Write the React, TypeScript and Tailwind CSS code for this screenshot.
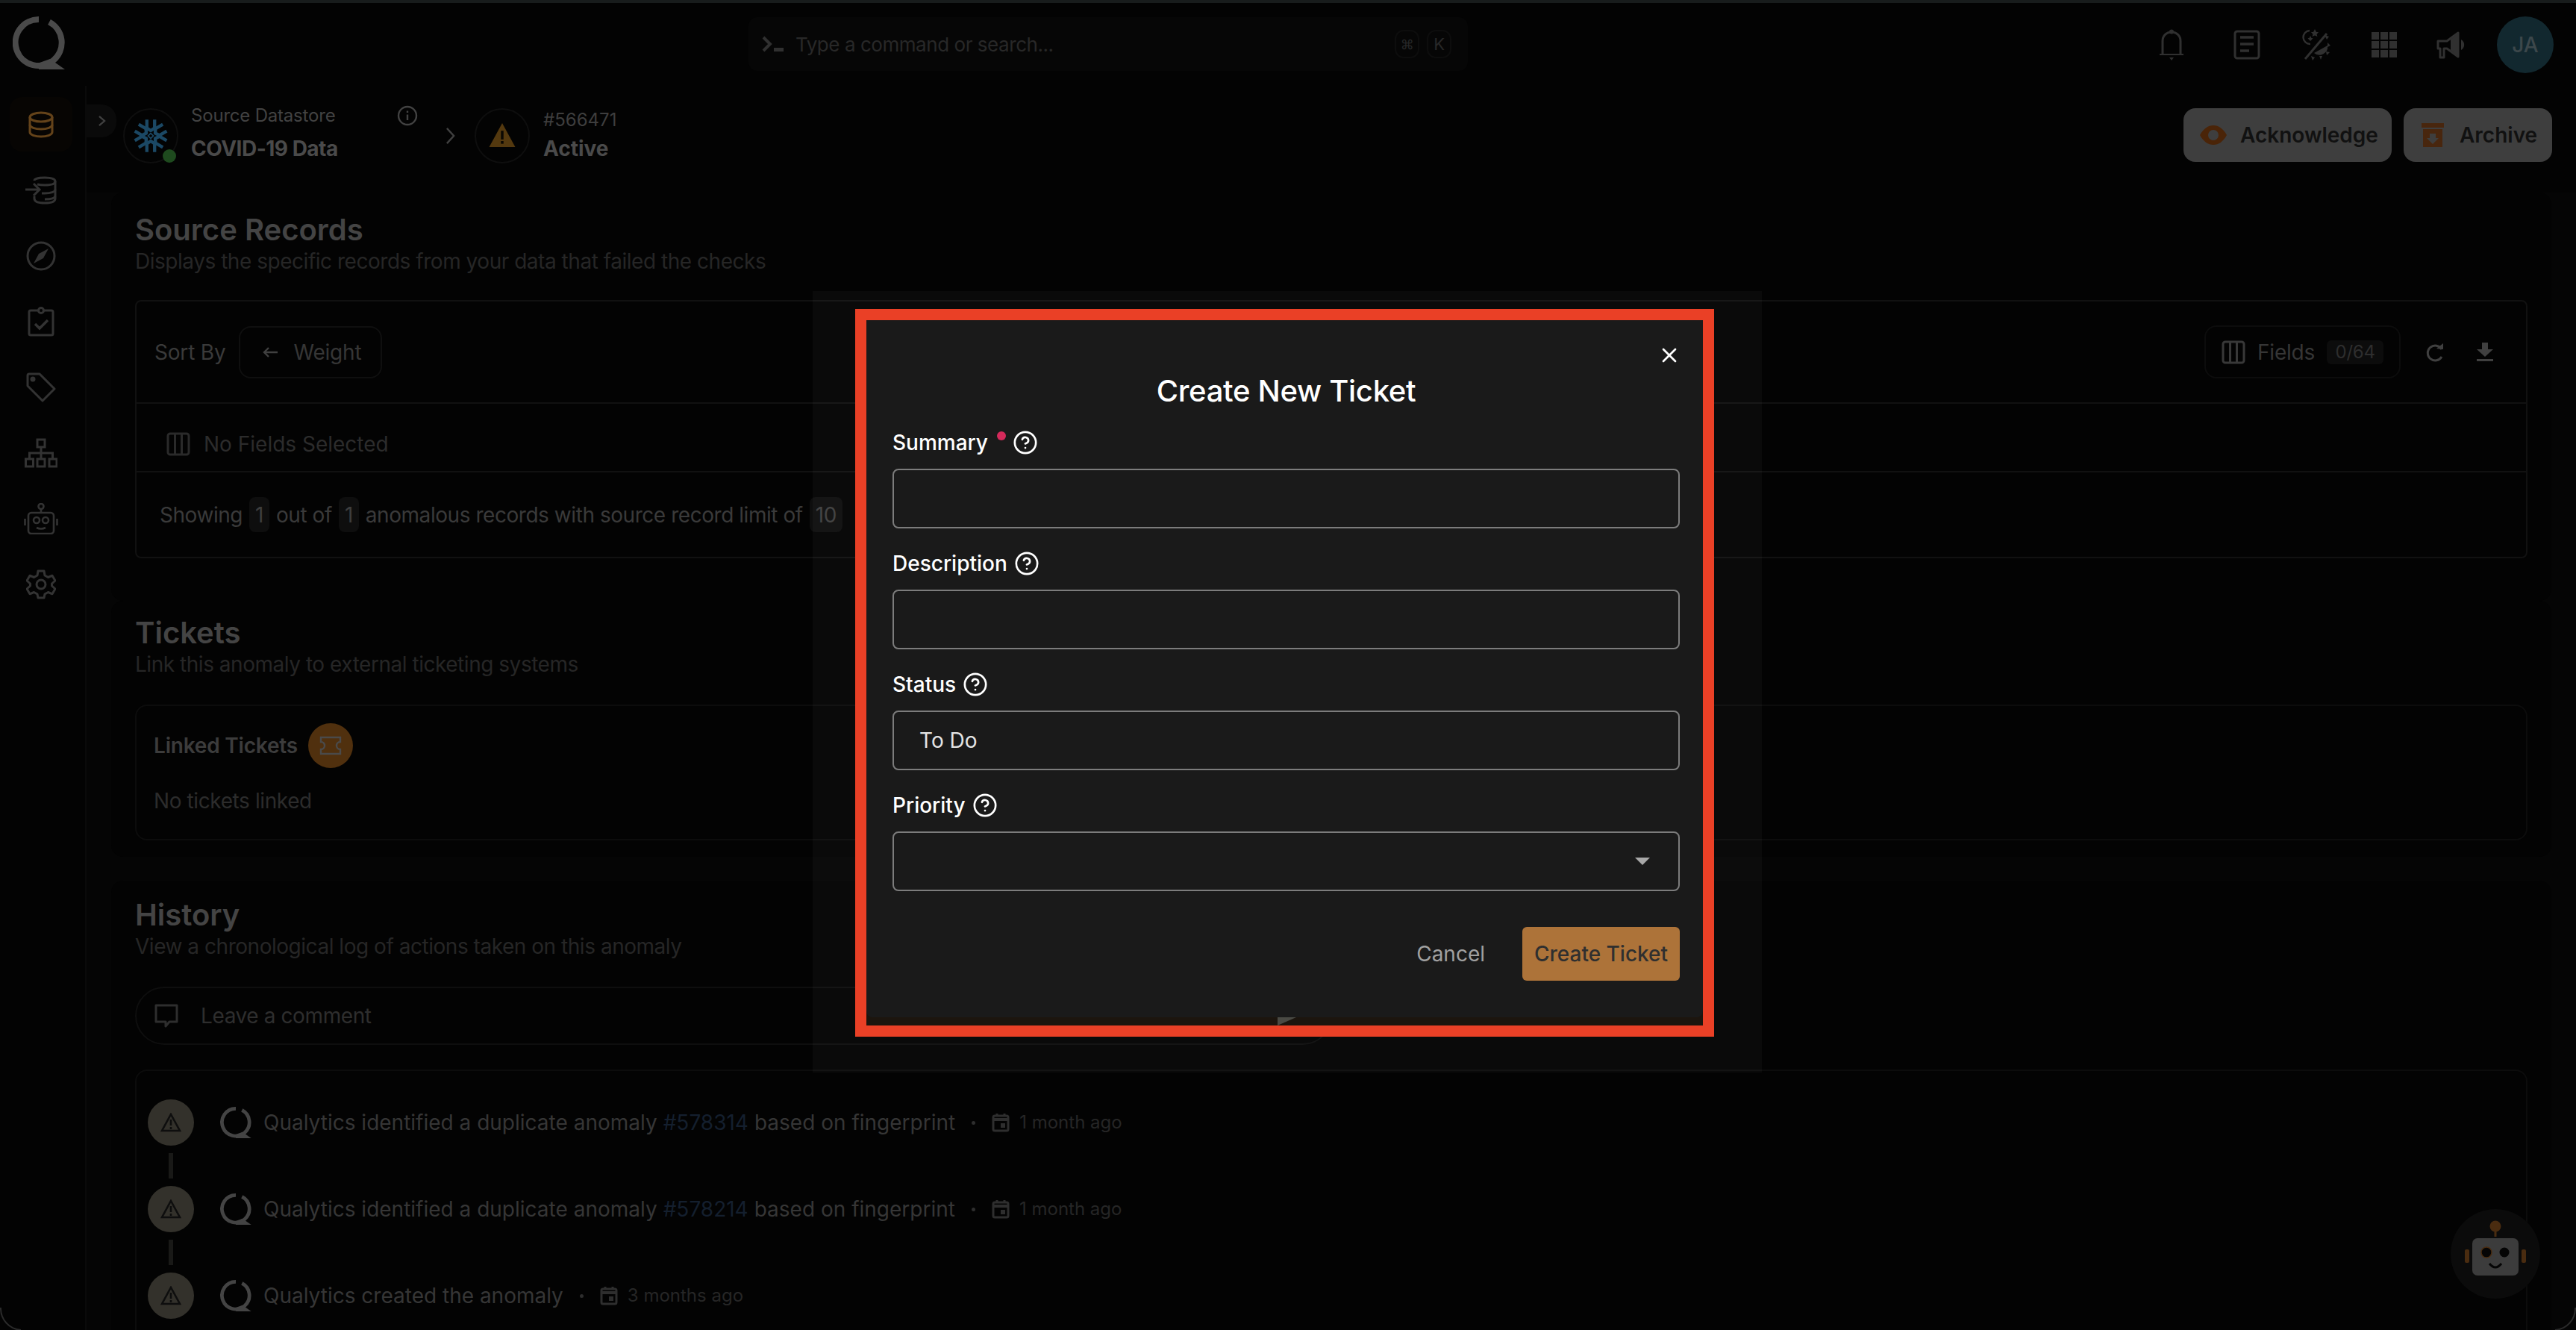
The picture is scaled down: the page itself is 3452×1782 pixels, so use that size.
import { CircleHelp, X } from "lucide-react"

function QLogo({ className, color = "#4a4a4a" }: { className: string; color?: string }) {
  return (
    <svg viewBox="0 0 70 71" className={className} fill="none">
      <path d="M35 4 A31 31 0 1 0 49 7.5" stroke={color} strokeWidth="8" />
      <path d="M36 62 L50 57 L70 71 L35 71 Z" fill={color} />
    </svg>
  )
}

function Snowflake() {
  const angles = [0, 60, 120, 180, 240, 300]
  return (
    <svg viewBox="-30 -30 60 60" className="h-[52px] w-[52px]" fill="none" stroke="#1b4864" strokeWidth="5">
      {angles.map((a) => (
        <path key={a} d="M-6 -25 V-12 L0 -8 L6 -12 V-25" transform={`rotate(${a})`} strokeLinejoin="round" />
      ))}
      <path d="M0 -4 L4 0 L0 4 L-4 0 Z" strokeWidth="2" />
    </svg>
  )
}

function WarnTriangle({ className, color, mark }: { className: string; color: string; mark: string }) {
  return (
    <svg viewBox="0 0 24 22" className={className}>
      <path d="M12 0 L24 22 H0 Z" fill={color} />
      <rect x="10.8" y="7" width="2.4" height="8" fill={mark} />
      <rect x="10.8" y="16.5" width="2.4" height="2.5" fill={mark} />
    </svg>
  )
}

function InfoIcon() {
  return (
    <svg viewBox="0 0 28 28" className="h-[28px] w-[28px]" fill="none" stroke="#424242" strokeWidth="2.4">
      <circle cx="14" cy="14" r="12" />
      <path d="M14 12.5 V20 M14 7.5 V10" />
    </svg>
  )
}

function ColumnsIcon({ className, color }: { className: string; color: string }) {
  return (
    <svg viewBox="0 0 32 32" className={className} fill="none" stroke={color} strokeWidth="3">
      <rect x="2" y="2" width="28" height="28" rx="3" />
      <path d="M11.5 2 V30 M20.5 2 V30" />
    </svg>
  )
}

function CalendarIcon({ className }: { className: string }) {
  return (
    <svg viewBox="0 0 24 26" className={className} fill="none">
      <rect x="2" y="4" width="20" height="20" rx="2" stroke="#2e2e2e" strokeWidth="3" />
      <path d="M2 9 H22" stroke="#2e2e2e" strokeWidth="4" />
      <path d="M7 1 V5 M17 1 V5" stroke="#2e2e2e" strokeWidth="3" />
      <rect x="12" y="14" width="6" height="6" fill="#2e2e2e" />
    </svg>
  )
}

const navStroke = "#333333"

function NavIcon({ name }: { name: string }) {
  if (name === "database") {
    return (
      <svg viewBox="0 0 34 36" className="h-[36px] w-[34px]" fill="none" stroke="#64431a" strokeWidth="3">
        <ellipse cx="17" cy="8" rx="15" ry="6" />
        <path d="M2 8 V28 C2 31.5 9 34 17 34 C25 34 32 31.5 32 28 V8" />
        <path d="M2 18 C2 21.5 9 24 17 24 C25 24 32 21.5 32 18" />
      </svg>
    )
  }
  if (name === "import") {
    return (
      <svg viewBox="0 0 42 38" className="h-[38px] w-[42px]" fill="none" stroke={navStroke} strokeWidth="3">
        <path d="M12 6 C12 3.5 18 2 26 2 C34 2 40 3.5 40 7 C40 10.5 34 12 26 12 C22 12 18 11.5 16 11" />
        <path d="M40 7 V30 C40 34 34 36 26 36 C18 36 12 34 12 30 V27" />
        <path d="M40 18 C40 21 34 23 26 23 H22 M40 27 C39 30 34 31 26 31" />
        <path d="M0 18 H18 M11 10 L19 18 L11 26" />
      </svg>
    )
  }
  if (name === "compass") {
    return (
      <svg viewBox="0 0 40 40" className="h-[40px] w-[40px]" fill="none">
        <circle cx="20" cy="20" r="18" stroke={navStroke} strokeWidth="3" />
        <path d="M30 10 L23 23 L10 30 L17 17 Z" fill={navStroke} />
      </svg>
    )
  }
  if (name === "clipboard") {
    return (
      <svg viewBox="0 0 36 40" className="h-[40px] w-[36px]" fill="none" stroke={navStroke} strokeWidth="3">
        <rect x="2" y="5" width="32" height="33" rx="2" />
        <circle cx="18" cy="5" r="3.5" fill="#030303" />
        <path d="M10 23 L16 29 L27 18" strokeWidth="3.5" />
      </svg>
    )
  }
  if (name === "tag") {
    return (
      <svg viewBox="0 0 40 40" className="h-[40px] w-[40px]" fill="none" stroke={navStroke} strokeWidth="3">
        <path d="M2 4 Q2 2 4 2 H18 L38 22 L22 38 L2 18 Z" strokeLinejoin="round" />
        <circle cx="9" cy="9" r="2" fill={navStroke} />
      </svg>
    )
  }
  if (name === "org") {
    return (
      <svg viewBox="0 0 44 40" className="h-[40px] w-[44px]" fill="none" stroke={navStroke} strokeWidth="3">
        <rect x="17" y="2" width="10" height="10" />
        <rect x="1.5" y="28" width="10" height="10" />
        <rect x="17" y="28" width="10" height="10" />
        <rect x="33" y="28" width="10" height="10" />
        <path d="M22 12 V28 M6.5 28 V20 H37.5 V28" />
      </svg>
    )
  }
  if (name === "robot") {
    return (
      <svg viewBox="0 0 46 42" className="h-[42px] w-[46px]" fill="none" stroke={navStroke} strokeWidth="2.6">
        <circle cx="23" cy="4.5" r="3.5" />
        <path d="M23 8 V13" />
        <rect x="6" y="13" width="34" height="28" rx="4" />
        <circle cx="17" cy="23" r="4" />
        <circle cx="29" cy="23" r="4" />
        <path d="M17 33 Q23 36 29 33 M1.5 21 V30 M44.5 21 V30" />
      </svg>
    )
  }
  return (
    <svg viewBox="0 0 40 40" className="h-[40px] w-[40px]" fill="none" stroke={navStroke} strokeWidth="3">
      <path
        d="M16 2 H24 L25 8 L29.5 10.5 L35 8.2 L39 15 L34.5 19 V22 L39 26 L35 32.8 L29.5 30.5 L25 33 L24 38 H16 L15 33 L10.5 30.5 L5 32.8 L1 26 L5.5 22 V19 L1 15 L5 8.2 L10.5 10.5 L15 8 Z"
        strokeLinejoin="round"
      />
      <circle cx="20" cy="20" r="6" />
    </svg>
  )
}

function TopIcons() {
  const c = "#303030"
  return (
    <div className="flex items-center">
      <svg viewBox="0 0 34 42" className="h-[42px] w-[34px]" fill="none">
        <path d="M5 33 V16 C5 9 10 4 17 4 C24 4 29 9 29 16 V33" stroke={c} strokeWidth="3" />
        <path d="M1 33 H33 V35 H1 Z" fill={c} />
        <circle cx="17" cy="3.5" r="3" fill={c} />
        <path d="M14 38 H20 L17 42 Z" fill={c} />
      </svg>
      <svg viewBox="0 0 36 40" className="ml-[66px] h-[40px] w-[36px]" fill="none" stroke={c} strokeWidth="3">
        <rect x="2" y="2" width="32" height="36" rx="3" />
        <path d="M9 10 H27 M9 19 H27 M9 28 H21" strokeWidth="3.5" />
      </svg>
      <svg viewBox="0 0 38 42" className="ml-[56px] h-[42px] w-[38px]" fill="none">
        <path d="M10 2 A9 9 0 0 0 11 20" stroke={c} strokeWidth="2.4" />
        <path d="M17 0 L19 4 L22 4 L19.5 7 L20.5 10 L17 8.5 L13.5 10 L14.5 7 L12 4 L15 4 Z M11 9 L12.5 12 L14.5 12 L13 14 L11 16 L9 14 L7.5 12 L9.5 12 Z" fill={c} />
        <path d="M33 6 L4 40" stroke={c} strokeWidth="3" />
        <path d="M34 22 A11 11 0 0 1 16 32 Z" fill={c} />
        <path d="M30 8 L36 10 L33 14 Z M34 18 L38 22 L34 24 Z M32 30 L37 31 L33 35 Z M23 36 L27 36 L25 41 Z M12 36 L17 38 L14 42 Z" fill={c} />
      </svg>
      <div className="ml-[55px] grid h-[34px] w-[34px] grid-cols-3 gap-[2px]">
        {[0, 1, 2, 3, 4, 5, 6, 7, 8].map((i) => (
          <div key={i} className="bg-[#303030]" />
        ))}
      </div>
      <svg viewBox="0 0 40 38" className="ml-[52px] h-[38px] w-[40px]" fill="none">
        <path d="M3 14 H15 L30 3 V35 L15 24 H11 V36 H6 V24 H3 Z" stroke={c} strokeWidth="3" fill="none" strokeLinejoin="round" />
        <path d="M20 12 L30 3 V35 L20 26 Z" fill={c} />
        <path d="M34 12 A8 8 0 0 1 34 26 Z" fill={c} />
      </svg>
      <div className="ml-[42px] flex h-[76px] w-[76px] items-center justify-center rounded-full bg-[#12282f] text-[28px] font-medium text-[#3c474b]">
        JA
      </div>
    </div>
  )
}

function Panel({ className, children }: { className: string; children: React.ReactNode }) {
  return <section className={`mx-[33px] rounded-[16px] bg-[#030303] px-[32px] ${className}`}>{children}</section>
}

function Heading({ title, sub }: { title: string; sub: string }) {
  return (
    <>
      <h2 className="text-[40px] leading-[48px] font-semibold text-[#444444]">{title}</h2>
      <p className="text-[28px] leading-[36px] tracking-[-0.47px] text-[#262626]">{sub}</p>
    </>
  )
}

function Pill({ children }: { children: React.ReactNode }) {
  return (
    <span className="mx-[9px] flex h-[47px] items-center rounded-[8px] bg-[#0e0e0e] px-[8px] text-[#3e3e3e]">{children}</span>
  )
}

function HistoryRow({ children, last }: { children: React.ReactNode; last?: boolean }) {
  return (
    <>
      <div className="flex h-[62px] items-center text-[28px] text-[#363636]">
        <div className="flex h-[62px] w-[62px] items-center justify-center rounded-full bg-[#33312b]">
          <svg viewBox="0 0 28 26" className="h-[26px] w-[28px]" fill="none" stroke="#0e0e0e" strokeWidth="2.6">
            <path d="M14 2 L26 24 H2 Z" />
            <path d="M14 9 V17 M14 19 V22" />
          </svg>
        </div>
        <QLogo className="mr-[16px] ml-[35px] h-[42px] w-[42px]" color="#444444" />
        {children}
      </div>
      {!last && <div className="my-[10px] ml-[28px] h-[34px] w-[6px] bg-[#191917]" />}
    </>
  )
}

function TimeAgo({ text }: { text: string }) {
  return (
    <>
      <span className="mx-[22px] h-[5px] w-[5px] rounded-full bg-[#2e2e2e]" />
      <CalendarIcon className="mr-[13px] h-[26px] w-[24px]" />
      <span className="text-[24px] text-[#262626]">{text}</span>
    </>
  )
}

function Field({ label, required, value, select }: { label: string; required?: boolean; value?: string; select?: boolean }) {
  return (
    <div className="mb-[29px]">
      <div className="flex h-[36px] items-center text-[28px] leading-[36px] font-medium text-white">
        {label}
        {required && <span className="mb-[18px] ml-[12px] h-[12px] w-[12px] rounded-full bg-[#d42a5b]" />}
        <CircleHelp className="ml-[9px] h-[34px] w-[34px] text-white" strokeWidth={1.9} />
      </div>
      <div className="mt-[17px] flex h-[80px] items-center justify-between rounded-[8px] border-2 border-[#7c7c7c] pr-[38px] pl-[34px] text-[28px] text-[#e4e4e4]">
        <span>{value}</span>
        {select && <span className="h-0 w-0 border-x-[10px] border-t-[10px] border-x-transparent border-t-[#a8a8a8]" />}
      </div>
    </div>
  )
}

export default function App() {
  const navItems = ["import", "compass", "clipboard", "tag", "org", "robot", "gear"]

  return (
    <div className="relative flex h-screen w-screen flex-col overflow-hidden bg-[#030303] [font-family:Inter,sans-serif]">
      <div className="h-[4px] shrink-0 bg-[#181c1c]" />

      {/* Top bar */}
      <header className="flex h-[111px] shrink-0 items-start">
        <QLogo className="mt-[18px] ml-[17px] h-[71px] w-[70px]" />
        <div className="mt-[19px] ml-[916px] flex h-[72px] w-[964px] items-center rounded-[12px] bg-[#060606] pr-[22px] pl-[18px] text-[26px] tracking-[-0.45px] text-[#282828]">
          <svg viewBox="0 0 30 22" className="mr-[15px] h-[22px] w-[30px]" fill="none">
            <path d="M2 2 L11 11 L2 20" stroke="#303030" strokeWidth="4" />
            <rect x="16" y="16" width="13" height="5" fill="#303030" />
          </svg>
          <span>Type a command or search...</span>
          <span className="ml-auto flex h-[38px] w-[33px] items-center justify-center rounded-[12px] border-2 border-[#0d0d0d] text-[18px]">⌘</span>
          <span className="ml-[10px] flex h-[38px] w-[33px] items-center justify-center rounded-[12px] border-2 border-[#0d0d0d] text-[22px]">K</span>
        </div>
        <div className="mt-[18px] ml-[926px]">
          <TopIcons />
        </div>
      </header>

      <div className="flex min-h-0 flex-1">
        {/* Sidebar */}
        <aside className="flex w-[116px] shrink-0 flex-col border-r-2 border-[#0a0a0a] pt-[15px] pl-[13px]">
          <div className="mb-[15px] flex h-[73px] w-[84px] items-center justify-center rounded-[16px] bg-[#070503]">
            <NavIcon name="database" />
          </div>
          {navItems.map((n) => (
            <div key={n} className="mb-[15px] flex h-[73px] w-[84px] items-center justify-center">
              <NavIcon name={n} />
            </div>
          ))}
        </aside>

        <main className="relative flex min-w-0 flex-1 flex-col bg-[#050505]">
          {/* Breadcrumb and actions */}
          <div className="flex h-[143px] shrink-0 items-start bg-[#030303] pt-[30px] pr-[32px] pl-[49px]">
            <div className="relative flex h-[74px] w-[74px] shrink-0 items-center justify-center rounded-full border-2 border-[#0e0e0e]">
              <Snowflake />
              <span className="absolute top-[53px] left-[51px] h-[18px] w-[18px] rounded-full bg-[#1e4a1e]" />
            </div>
            <div className="-mt-[4px] ml-[17px] w-[304px] shrink-0">
              <div className="flex h-[28px] items-center">
                <span className="w-[276px] text-[24px] leading-[28px] tracking-[-0.2px] whitespace-nowrap text-[#424242]">Source Datastore</span>
                <InfoIcon />
              </div>
              <div className="mt-[12px] text-[28px] leading-[36px] font-bold tracking-[-0.5px] whitespace-nowrap text-[#4a4a4a]">COVID-19 Data</div>
            </div>
            <svg viewBox="0 0 14 26" className="mt-[25px] ml-[37px] h-[24px] w-[13px]" fill="none" stroke="#404040" strokeWidth="2.6">
              <path d="M2 2 L12 13 L2 24" />
            </svg>
            <div className="ml-[26px] flex h-[74px] w-[74px] shrink-0 items-center justify-center rounded-full border-2 border-[#0e0e0e]">
              <WarnTriangle className="mb-[2px] h-[32px] w-[36px]" color="#54390f" mark="#0b0803" />
            </div>
            <div className="ml-[18px]">
              <div className="mt-[1px] text-[24px] leading-[30px] text-[#3e3e3e]">#566471</div>
              <div className="mt-[5px] text-[28px] leading-[36px] font-bold text-[#4a4a4a]">Active</div>
            </div>
            <div className="ml-auto flex">
              <button className="flex h-[72px] w-[279px] items-center rounded-[16px] bg-[#3e3e3e] pl-[22px] text-[28px] font-semibold text-[#111]">
                <svg viewBox="0 0 36 26" className="mr-[18px] h-[26px] w-[36px]">
                  <path fillRule="evenodd" d="M0 13 C5 4 11 0 18 0 C25 0 31 4 36 13 C31 22 25 26 18 26 C11 26 5 22 0 13 Z M18 6 A7 7 0 1 0 18 20 A7 7 0 1 0 18 6 Z" fill="#4a2408" />
                </svg>
                Acknowledge
              </button>
              <button className="ml-[16px] flex h-[72px] w-[199px] items-center rounded-[16px] bg-[#3e3e3e] pl-[24px] text-[28px] font-semibold text-[#111]">
                <svg viewBox="0 0 30 32" className="mr-[21px] h-[32px] w-[30px]">
                  <path d="M0 0 H30 V6 H0 Z" fill="#48260e" />
                  <path fillRule="evenodd" d="M2 8 H28 V32 H2 Z M11 14 V20 H7 L15 28 L23 20 H19 V14 Z" fill="#48260e" />
                </svg>
                Archive
              </button>
            </div>
          </div>

          {/* Collapse tab sits on the sidebar edge */}
          <div className="absolute top-[25px] left-0 flex h-[44px] w-[40px] items-center justify-center rounded-r-[20px] bg-[#0a0a0a]">
            <svg viewBox="0 0 12 18" className="h-[16px] w-[11px]" fill="none" stroke="#404040" strokeWidth="2.6">
              <path d="M2 2 L10 9 L2 16" />
            </svg>
          </div>

          {/* Source records */}
          <Panel className="pt-[26px] pb-[57px]">
            <Heading title="Source Records" sub="Displays the specific records from your data that failed the checks" />
            <div className="mt-[34px] rounded-[8px] border-2 border-[#111] text-[28px]">
              <div className="flex h-[137px] items-center border-b-2 border-[#111] pr-[44px] pl-[24px] tracking-[-0.2px] text-[#3a3a3a]">
                Sort By
                <div className="ml-[18px] flex h-[70px] w-[192px] items-center rounded-[16px] border-2 border-[#0f0f0f] pl-[30px] text-[#363636]">
                  <svg viewBox="0 0 20 14" className="mr-[21px] h-[14px] w-[20px]" fill="none" stroke="#404040" strokeWidth="2.4">
                    <path d="M20 7 H2 M8 1 L2 7 L8 13" />
                  </svg>
                  Weight
                </div>
                <div className="ml-auto flex h-[71px] w-[263px] items-center rounded-[16px] border-2 border-[#0c0c0c] pl-[21px] text-[#363636]">
                  <ColumnsIcon className="mr-[16px] h-[32px] w-[32px]" color="#383838" />
                  Fields
                  <span className="ml-[16px] flex h-[32px] w-[76px] items-center justify-center rounded-[6px] bg-[#0c0c0c] text-[24px] text-[#2e2e2e]">0/64</span>
                </div>
                <svg viewBox="0 0 24 28" className="ml-[34px] h-[28px] w-[24px]" fill="none" stroke="#404040" strokeWidth="3">
                  <path d="M21 10 A10 10 0 1 0 21 20" />
                  <path d="M14 9 L23 10 L23 2 Z" fill="#404040" stroke="none" />
                </svg>
                <svg viewBox="0 0 22 26" className="ml-[44px] h-[26px] w-[22px]" fill="#404040">
                  <path d="M7 0 H15 V9 H22 L11 19 L0 9 H7 Z" />
                  <rect x="0" y="22" width="22" height="3" />
                </svg>
              </div>
              <div className="flex h-[92px] items-center border-b-2 border-[#111] pt-[18px] pl-[39px] text-[#2c2c2c]">
                <ColumnsIcon className="mr-[17px] h-[32px] w-[34px]" color="#2a2a2a" />
                No Fields Selected
              </div>
              <div className="flex h-[113px] items-center pl-[31px] tracking-[-0.45px] text-[#3a3a3a]">
                Showing
                <Pill>1</Pill>
                out of
                <Pill>1</Pill>
                anomalous records with source record limit of
                <Pill>10</Pill>
              </div>
            </div>
          </Panel>

          {/* Tickets */}
          <Panel className="pt-[19px] pb-[22px]">
            <Heading title="Tickets" sub="Link this anomaly to external ticketing systems" />
            <div className="mt-[36px] rounded-[16px] border-2 border-[#0c0c0c] pt-[23px] pb-[33px] pl-[23px] text-[28px]">
              <div className="flex items-center font-semibold tracking-[-0.2px] text-[#3c3c3c]">
                Linked Tickets
                <span className="ml-[14px] flex h-[60px] w-[60px] items-center justify-center rounded-full bg-[#50300e]">
                  <svg viewBox="0 0 30 26" className="h-[26px] w-[32px]" fill="none" stroke="#4a4a4a" strokeWidth="2.4">
                    <path d="M2 2 H28 V8 A5 5 0 0 0 28 18 V24 H2 V18 A5 5 0 0 0 2 8 Z" />
                  </svg>
                </span>
              </div>
              <p className="mt-[26px] leading-[36px] tracking-[-0.4px] text-[#2c2c2c]">No tickets linked</p>
            </div>
          </Panel>

          {/* History */}
          <Panel className="mt-[32px] flex-1 pt-[22px]">
            <Heading title="History" sub="View a chronological log of actions taken on this anomaly" />
            <div className="mt-[36px] flex h-[78px] w-[1604px] items-center rounded-[39px] border-2 border-[#0e0e0e] pl-[24px] text-[28px] tracking-[-0.4px] text-[#2e2e2e]">
              <svg viewBox="0 0 32 32" className="mr-[30px] h-[32px] w-[32px]" fill="none" stroke="#2e2e2e" strokeWidth="3">
                <path d="M2 2 H30 V24 H20 L15 30 V24 H2 Z" strokeLinejoin="round" />
              </svg>
              Leave a comment
            </div>
            <div className="mt-[33px] h-[400px] rounded-[16px] border-2 border-[#0c0c0c] pt-[38px] pl-[15px]">
              <HistoryRow>
                Qualytics identified a duplicate anomaly
                <span className="mx-[8px] text-[#141f2e]">#578314</span>
                based on fingerprint
                <TimeAgo text="1 month ago" />
              </HistoryRow>
              <HistoryRow>
                Qualytics identified a duplicate anomaly
                <span className="mx-[8px] text-[#141f2e]">#578214</span>
                based on fingerprint
                <TimeAgo text="1 month ago" />
              </HistoryRow>
              <HistoryRow last>
                Qualytics created the anomaly
                <TimeAgo text="3 months ago" />
              </HistoryRow>
            </div>
          </Panel>
        </main>
      </div>

      {/* Assistant bubble */}
      <div className="absolute top-[1620px] left-[3284px] flex h-[120px] w-[120px] items-center justify-center rounded-full bg-[#0b0b0b]">
        <svg viewBox="0 0 82 90" className="h-[90px] w-[82px]">
          <circle cx="41" cy="8" r="7.5" fill="#4a2c10" />
          <rect x="39.5" y="14" width="3" height="8" fill="#4a2c10" />
          <rect x="10" y="24" width="62" height="50" rx="7" fill="#3c3c3c" />
          <rect x="0" y="39" width="6" height="18" rx="2" fill="#4a2c10" />
          <rect x="76" y="39" width="6" height="18" rx="2" fill="#4a2c10" />
          <circle cx="29" cy="43" r="7" fill="#050505" stroke="#4a2c10" strokeWidth="1.4" />
          <circle cx="53" cy="43" r="6.5" fill="#050505" />
          <path d="M33 58 Q41 68 49 58" fill="none" stroke="#050505" strokeWidth="3" />
        </svg>
      </div>

      {/* Window corners */}
      <svg viewBox="0 0 30 30" className="absolute bottom-0 left-0 h-[30px] w-[30px]" fill="none" stroke="#2a2a2a" strokeWidth="2">
        <path d="M1 0 A29 29 0 0 0 28 30" />
      </svg>
      <svg viewBox="0 0 30 30" className="absolute right-0 bottom-0 h-[30px] w-[30px]" fill="none" stroke="#2a2a2a" strokeWidth="2">
        <path d="M29 0 A29 29 0 0 1 2 30" />
      </svg>

      {/* Modal backdrop panel */}
      <div className="absolute top-[390px] left-[1089px] h-[1047px] w-[1272px] bg-white/[0.03]" />

      {/* Modal */}
      <div className="absolute top-[414px] left-[1146px] flex h-[975px] w-[1151px] flex-col border-[15px] border-[#ea4026] bg-[#1c150e]">
        <div className="relative h-[934px] shrink-0 rounded-b-[8px] bg-[#1a1a1a] pr-[31px] pl-[35px]">
          <div className="flex h-[63px] items-end justify-end pr-[0px]">
            <X className="h-[32px] w-[32px] translate-x-[2px] text-white" strokeWidth={2} />
          </div>
          <h2 className="mt-[4px] text-center text-[40px] leading-[56px] font-medium tracking-[-0.3px] text-white">Create New Ticket</h2>
          <div className="mt-[23px]">
            <Field label="Summary" required />
            <Field label="Description" />
            <Field label="Status" value="To Do" />
            <Field label="Priority" select />
          </div>
          <div className="mt-[48px] flex items-center justify-end text-[28px]">
            <span className="mr-[50px] text-[#a0a0a0]">Cancel</span>
            <button className="h-[72px] w-[211px] rounded-[6px] bg-[#ad7339] font-medium text-[#2f2f2f]">Create Ticket</button>
          </div>
        </div>
        <div className="ml-[551px] h-0 w-0 border-t-[11px] border-r-[25px] border-t-[#4a4a44] border-r-transparent" />
      </div>
    </div>
  )
}
